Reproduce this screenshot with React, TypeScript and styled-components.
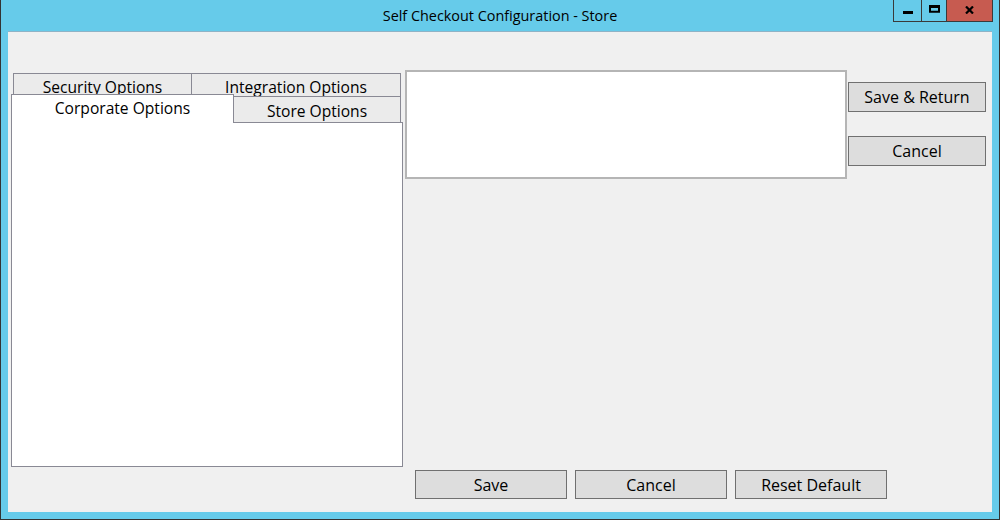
import React from "react";
import styled, { createGlobalStyle } from "styled-components";

const Global = createGlobalStyle`
  html, body { margin: 0; padding: 0; background: #ffffff; }
  body { font-family: "Open Sans", "Noto Sans", "Liberation Sans", sans-serif; }
  * { box-sizing: border-box; }
`;

const Frame = styled.div`
  width: 1000px;
  height: 520px;
  background: #66cbea;
  border-left: 1px solid #333333;
  border-right: 1px solid #333333;
  border-bottom: 1px solid #333333;
  display: flex;
  flex-direction: column;
  padding: 0 7px 7px 7px;
  font-family: "Open Sans", "Noto Sans", sans-serif;
  color: #000000;
`;

const TitleBar = styled.div`
  height: 31px;
  margin: 0 -7px;
  display: grid;
  grid-template-columns: 1fr auto 1fr;
`;

const Title = styled.div`
  grid-column: 2;
  font-size: 14.4px;
  line-height: 16px;
  padding-top: 8px;
  white-space: nowrap;
`;

const Caption = styled.div`
  grid-column: 3;
  justify-self: end;
  align-self: start;
  margin-right: 6px;
  display: flex;
  height: 22px;
  border-left: 1px solid #3a3a3a;
  border-bottom: 1px solid #3a3a3a;
`;

const CapBtn = styled.div<{ $w: number; $close?: boolean }>`
  width: ${(p) => p.$w}px;
  height: 21px;
  border-right: 1px solid #3a3a3a;
  background: ${(p) => (p.$close ? "#c75b50" : "#66cbea")};
  display: flex;
  align-items: center;
  justify-content: center;
`;

const Client = styled.div`
  flex: 1;
  background: #f0f0f0;
  border-top: 1px solid #8fb3c6;
  padding: 38px 0 0 3px;
  display: flex;
  flex-direction: column;
`;

const MainRow = styled.div`
  display: flex;
  align-items: flex-start;
`;

const LeftCol = styled.div`
  margin-top: 3px;
  width: 392px;
  height: 394px;
  display: flex;
  flex-direction: column;
`;

const TabRow = styled.div<{ $indent: number; $h: number }>`
  display: flex;
  align-items: flex-end;
  height: ${(p) => p.$h}px;
  padding-left: ${(p) => p.$indent}px;
`;

const Tab = styled.div<{ $w: number; $active?: boolean; $first?: boolean }>`
  width: ${(p) => p.$w}px;
  height: ${(p) => (p.$active ? 29 : 26)}px;
  margin-left: ${(p) => (p.$first ? 0 : -1)}px;
  margin-bottom: ${(p) => (p.$active ? -1 : 0)}px;
  position: relative;
  z-index: ${(p) => (p.$active ? 2 : 1)};
  background: ${(p) => (p.$active ? "#ffffff" : "#ebebeb")};
  border: 1px solid #898994;
  border-bottom: none;
  font-size: 15.6px;
  line-height: 20px;
  padding-top: ${(p) => (p.$active ? 3 : 4)}px;
  text-align: center;
  white-space: nowrap;
`;

const TopTab = styled(Tab)`
  height: 23px;
  padding-top: 3px;
`;

const Panel = styled.div`
  flex: 1;
  background: #ffffff;
  border: 1px solid #898994;
`;

const TextBox = styled.div`
  margin-left: 2px;
  width: 442px;
  height: 109px;
  background: #ffffff;
  border: 2px solid #b5b5b5;
`;

const SideButtons = styled.div`
  margin-left: 1px;
  margin-top: 12px;
  display: flex;
  flex-direction: column;
  gap: 24px;
`;

const Button = styled.div<{ $w: number; $h: number }>`
  width: ${(p) => p.$w}px;
  height: ${(p) => p.$h}px;
  background: #dddddd;
  border: 1px solid #707070;
  font-size: 16px;
  display: flex;
  align-items: center;
  justify-content: center;
  white-space: nowrap;
`;

const BottomRow = styled.div`
  margin-top: 3px;
  margin-left: 404px;
  display: flex;
  gap: 8px;
`;

export default function App() {
  return (
    <>
      <Global />
      <Frame>
        <TitleBar>
          <Title>Self Checkout Configuration - Store</Title>
          <Caption>
            <CapBtn $w={28}>
              <svg width="10" height="3" viewBox="0 0 10 3" style={{ marginTop: 4 }}>
                <rect x="0" y="0" width="10" height="3" fill="#000" />
              </svg>
            </CapBtn>
            <CapBtn $w={25}>
              <svg width="11" height="8" viewBox="0 0 11 8" style={{ marginTop: -3 }}>
                <rect x="1" y="1.25" width="9" height="5.5" fill="none" stroke="#000" strokeWidth="2" />
                <rect x="0" y="0" width="11" height="3" fill="#000" />
              </svg>
            </CapBtn>
            <CapBtn $w={46} $close>
              <svg width="9" height="8" viewBox="0 0 9 8" style={{ marginTop: -2 }}>
                <path d="M1 0.5 L8 7.5 M8 0.5 L1 7.5" stroke="#000" strokeWidth="2.2" fill="none" />
              </svg>
            </CapBtn>
          </Caption>
        </TitleBar>
        <Client>
          <MainRow>
            <LeftCol>
              <TabRow $indent={2} $h={23}>
                <TopTab $w={179} $first>Security Options</TopTab>
                <TopTab $w={210}>Integration Options</TopTab>
              </TabRow>
              <TabRow $indent={0} $h={26}>
                <Tab $w={223} $first $active>Corporate Options</Tab>
                <Tab $w={168}>Store Options</Tab>
              </TabRow>
              <Panel />
            </LeftCol>
            <TextBox />
            <SideButtons>
              <Button $w={138} $h={30}>Save &amp; Return</Button>
              <Button $w={138} $h={30}>Cancel</Button>
            </SideButtons>
          </MainRow>
          <BottomRow>
            <Button $w={152} $h={29}>Save</Button>
            <Button $w={152} $h={29}>Cancel</Button>
            <Button $w={152} $h={29}>Reset Default</Button>
          </BottomRow>
        </Client>
      </Frame>
    </>
  );
}
